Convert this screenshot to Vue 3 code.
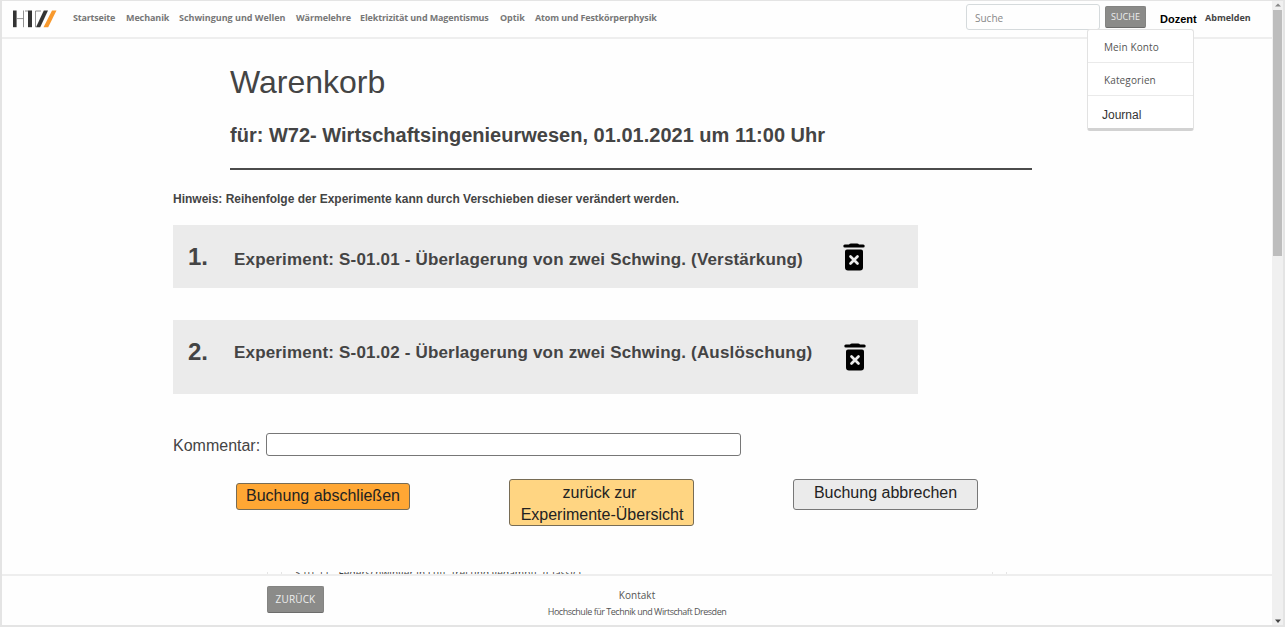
<script setup>
const navItems = [
  { label: 'Startseite', key: 'start' },
  { label: 'Mechanik', key: 'mech' },
  { label: 'Schwingung und Wellen', key: 'wave' },
  { label: 'Wärmelehre', key: 'heat' },
  { label: 'Elektrizität und Magentismus', key: 'elec' },
  { label: 'Optik', key: 'optic' },
  { label: 'Atom und Festkörperphysik', key: 'atom' },
]

const experiments = [
  { nr: '1.', title: 'Experiment: S-01.01 - Überlagerung von zwei Schwing. (Verstärkung)', key: 'first' },
  { nr: '2.', title: 'Experiment: S-01.02 - Überlagerung von zwei Schwing. (Auslöschung)', key: 'second' },
]
</script>

<template>
  <div class="window">
    <div class="page">
      <header class="topbar">
        <svg class="logo" viewBox="0 0 44 18" width="44" height="18">
          <path d="M0 .5h3.600v16.700H0z" fill="#333" />
          <path d="M3.600 8.600H10.500M10.500.5v16.700M12 1h3M22.500 17.200V1H28" fill="none" stroke="#777" stroke-width=".8" />
          <path d="M15 .5h4v16.700h-4z" fill="#333" />
          <path d="M30.800.5h4.200L27.200 17.200H23z" fill="#333" />
          <path d="M39 .5h4.500L35.200 17.200h-4.700z" fill="#f8992d" />
        </svg>
        <nav class="nav">
          <a v-for="n in navItems" :key="n.key" :class="n.key">{{ n.label }}</a>
        </nav>
        <div class="search">Suche</div>
        <button class="grey search-button">SUCHE</button>
        <div class="account">
          <span class="user">Dozent</span>
          <div class="menu">
            <a>Mein Konto</a>
            <a>Kategorien</a>
            <a class="journal">Journal</a>
          </div>
        </div>
        <a class="logout">Abmelden</a>
      </header>

      <main class="content">
        <div class="heading">
          <h1>Warenkorb</h1>
          <h2><span>für: W72- Wirtschaftsingenieurwesen, 01.01.2021 um 11:00 Uhr</span></h2>
        </div>
        <p class="hint">Hinweis: Reihenfolge der Experimente kann durch Verschieben dieser verändert werden.</p>

        <section v-for="e in experiments" :key="e.key" class="row" :class="e.key">
          <span class="nr">{{ e.nr }}</span>
          <span class="title">{{ e.title }}</span>
          <svg class="trash" viewBox="0 0 22 28" width="22" height="28">
            <path d="M6 1.600Q6.500.4 8 .4h6q1.500 0 2 1.200h4.200a1.300 1.300 0 0 1 0 3H1.800a1.300 1.300 0 0 1 0-3z" />
            <path d="M4 6.600h14a2 2 0 0 1 2 2v16a3 3 0 0 1-3 3H5a3 3 0 0 1-3-3v-16a2 2 0 0 1 2-2z" />
            <path d="M7.500 13.500l7 7M14.500 13.500l-7 7" stroke="#ebebeb" stroke-width="2.700" stroke-linecap="round" />
          </svg>
        </section>

        <div class="comment">
          <label>Kommentar:</label>
          <input type="text" />
        </div>

        <div class="actions">
          <button class="finish">Buchung abschließen</button>
          <button class="back"><span>zurück zur</span>Experimente-Übersicht</button>
          <button class="cancel">Buchung abbrechen</button>
        </div>

        <div class="clipped"><i></i><i></i><span>S-01.11 - Federschwinger in Luft, frei und gedämpft. (Classic)</span><i></i><i></i></div>
      </main>

      <footer class="footer">
        <button class="grey return">ZURÜCK</button>
        <div class="contact">
          <p class="kontakt">Kontakt</p>
          <p class="school">Hochschule für Technik und Wirtschaft Dresden</p>
        </div>
      </footer>
    </div>
    <aside class="scrollbar">
      <svg viewBox="0 0 6 4" width="6" height="4"><path d="M0 3.500L3 .5l3 3z" fill="#888" /></svg>
      <div class="thumb"></div>
      <svg class="down" viewBox="0 0 6 4" width="6" height="4"><path d="M0 .5h6L3 4z" fill="#444" /></svg>
    </aside>
  </div>
</template>

<style>
body { background: #fff; overflow: hidden; }
</style>

<style scoped>
* { box-sizing: border-box; }
.window {
  display: flex;
  width: 1285px;
  height: 627px;
  border: 2px solid #e4e4e4;
  border-top-width: 1px;
  font-family: "Liberation Sans", Arial, sans-serif;
  color: #444;
  background: #fefefe;
}
.page { display: flex; flex-direction: column; width: 1270px; flex: none; }
h1, h2, p { margin: 0; white-space: nowrap; }
button { font-family: inherit; margin: 0; padding: 0; white-space: nowrap; }

.topbar {
  display: flex;
  align-items: flex-start;
  height: 38px;
  border-bottom: 2px solid #eee;
  font-family: "Open Sans", "Noto Sans", sans-serif;
  flex: none;
}
.logo { margin: 9px 0 0 11px; flex: none; }
.nav { display: flex; width: 905px; padding: 10px 0 0 16px; flex: none; }
.nav a { font-size: 9px; line-height: 14px; font-weight: 700; letter-spacing: -0.09px; color: #777; white-space: nowrap; flex: none; }
.nav .start { width: 53px; letter-spacing: -0.2px; }
.mech { width: 53px; }
.nav .wave { width: 117px; letter-spacing: -0.02px; }
.heat { width: 64px; }
.nav .elec { width: 140px; letter-spacing: -0.14px; }
.optic { width: 35px; }
.nav .atom { letter-spacing: -0.14px; }
.search {
  width: 134px;
  height: 26px;
  margin: 3px 0 0 4px;
  padding-left: 8px;
  border: 1px solid #d5dadc;
  border-radius: 3px;
  font-size: 10px;
  line-height: 26px;
  color: #888;
  flex: none;
}
.grey {
  border: 1px solid #848482;
  border-bottom-color: #6c6c6b;
  border-radius: 2px;
  background: #8b8b89;
  color: #eee;
  font-family: "Open Sans", "Noto Sans", sans-serif;
}
.search-button { width: 41px; height: 22px; margin: 5px 0 0 5px; font-size: 9px; line-height: 18px; flex: none; }
.account { position: relative; width: 59px; flex: none; }
.user {
  display: block;
  padding: 11px 0 0 14px;
  font: 700 11px/14px "Liberation Sans", Arial, sans-serif;
  color: #000;
}
.menu {
  position: absolute;
  z-index: 2;
  left: -59px;
  top: 28px;
  width: 107px;
  height: 102px;
  border: 1px solid #e2e2e2;
  border-bottom: 3px solid #d2d2d2;
  border-radius: 3px;
  background: #fff;
}
.menu a {
  display: block;
  height: 33px;
  padding-left: 16px;
  border-bottom: 1px solid #eaeaea;
  font-size: 10px;
  line-height: 34px;
  letter-spacing: 0.12px;
  color: #555;
}
.menu .journal { padding-left: 14px; border: 0; font: 12px/38px "Liberation Sans", Arial, sans-serif; letter-spacing: 0; color: #333; }
.logout { padding-top: 10px; font-size: 9px; font-weight: 700; line-height: 14px; color: #444; }

.content { height: 535px; flex: none; overflow: hidden; }
.heading { width: 802px; height: 131px; margin-left: 228px; border-bottom: 2px solid #4b4b4b; }
h1 { padding-top: 25px; font-size: 32px; line-height: 36px; font-weight: 400; }
h2 { padding-top: 23px; font-size: 20px; line-height: 24px; letter-spacing: 0.01px; }
.hint { margin: 21px 0 0 171px; font-size: 12px; font-weight: 700; line-height: 16px; }
.row {
  display: flex;
  align-items: flex-start;
  width: 745px;
  margin-left: 171px;
  background: #ebebeb;
  font-weight: 700;
}
.first { height: 63px; margin-top: 18px; }
.second { height: 74px; margin-top: 32px; }
.nr { width: 61px; padding: 18px 0 0 15px; font-size: 24px; line-height: 28px; flex: none; }
.title { width: 609px; padding-top: 25px; font-size: 17px; line-height: 20px; letter-spacing: 0.175px; white-space: nowrap; flex: none; }
.trash { margin-top: 18px; fill: #000; flex: none; }
.second .title { width: 610px; padding-top: 23px; }
.second .trash { margin-top: 23px; }
.comment { display: flex; height: 23px; margin: 39px 0 0 171px; }
.comment label { width: 93px; font-size: 16px; line-height: 26px; }
.comment input { width: 475px; height: 23px; border: 1px solid #777; border-radius: 3px; background: #fff; padding: 0; }
.actions { display: flex; align-items: flex-start; height: 47px; margin: 23px 0 0 234px; }
.actions button { border: 1px solid #776c55; border-radius: 3px; font-size: 16px; line-height: 22px; color: #222; }
.actions .finish { width: 174px; height: 27px; margin-top: 4px; padding-bottom: 1px; background: #ffa734; }
.actions .back { width: 185px; height: 47px; margin-left: 99px; padding: 2px 0 0 1px; background: #ffd582; }
.back span { display: block; padding-right: 5px; }
.actions .cancel { width: 185px; height: 31px; margin-left: 99px; padding-bottom: 4px; border-color: #777; background: #ebebeb; }
.clipped {
  display: flex;
  height: 3px;
  margin: 46px 0 0 265px;
  overflow: hidden;
  font: 10px/3px "Open Sans", "Noto Sans", sans-serif;
}
.clipped i { width: 1px; margin-right: 13px; background: #e5e5e5; flex: none; }
.clipped span { width: 697px; letter-spacing: 0.09px; white-space: nowrap; flex: none; }

.footer {
  display: flex;
  height: 51px;
  border-top: 2px solid #eee;
  font-family: "Open Sans", "Noto Sans", sans-serif;
  flex: none;
}
.return { width: 57px; height: 27px; margin: 10px 0 0 265px; font-size: 10px; line-height: 23px; letter-spacing: 0.15px; flex: none; }
.contact { width: 200px; margin-left: 213px; padding-top: 12px; text-align: center; color: #555; }
.kontakt { font-size: 10px; line-height: 14px; letter-spacing: 0.05px; }
.school { font-size: 9px; line-height: 14px; letter-spacing: -0.48px; margin-top: 3px; }

.scrollbar {
  display: flex;
  flex-direction: column;
  align-items: center;
  width: 11px;
  padding-top: 2px;
  background: #f0f0f0;
}
.thumb { width: 9px; height: 246px; margin-top: 3px; background: #bdbdbd; }
.down { margin: auto 0 2px; }
</style>
